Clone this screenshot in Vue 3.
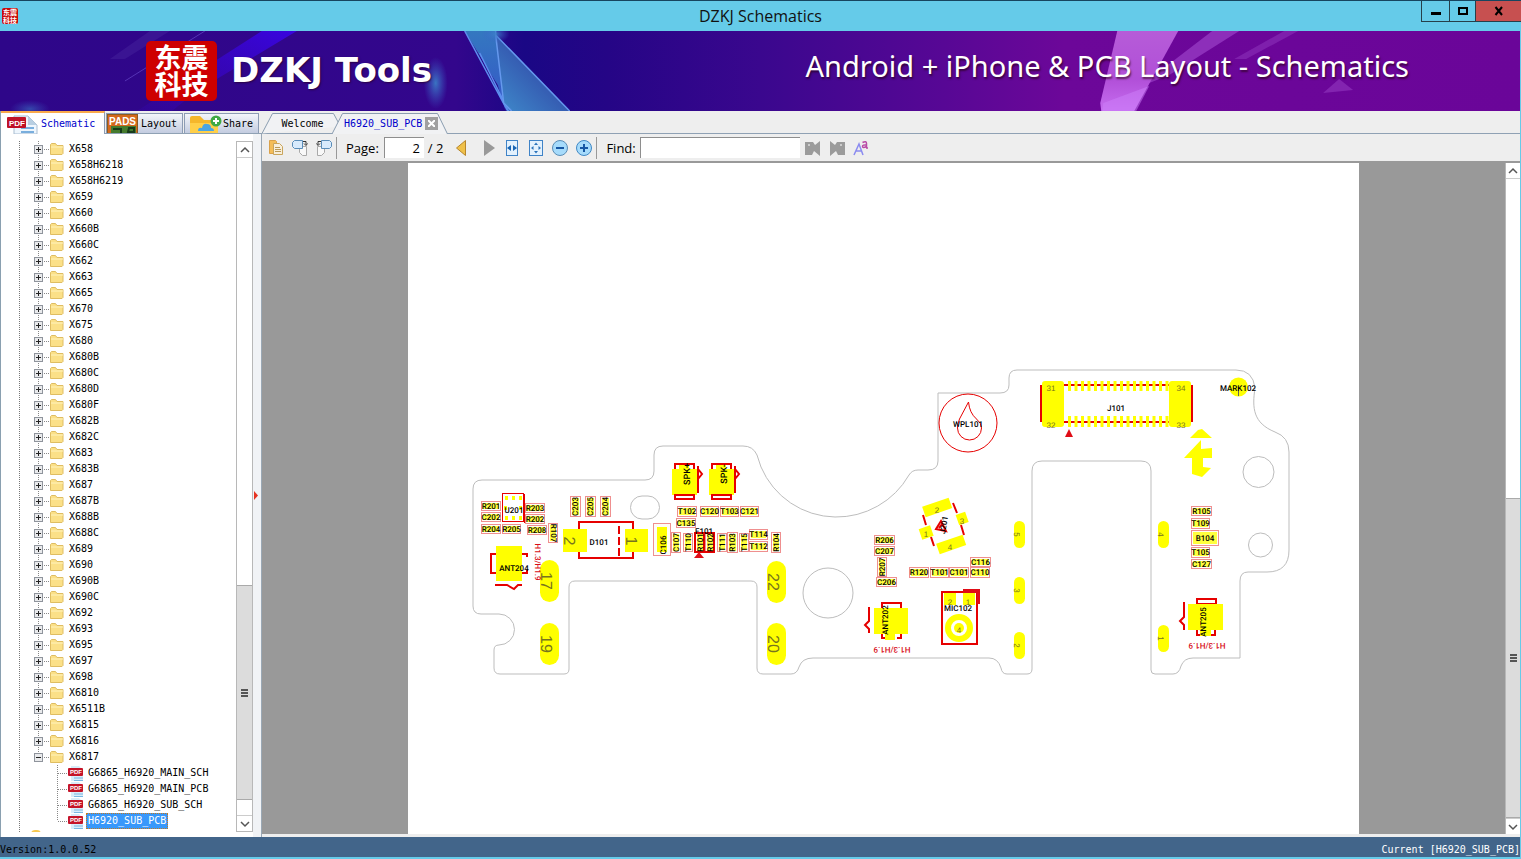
<script setup>
import { ref } from 'vue'

const models = ['X658', 'X658H6218', 'X658H6219', 'X659', 'X660', 'X660B', 'X660C', 'X662', 'X663', 'X665', 'X670', 'X675', 'X680', 'X680B', 'X680C', 'X680D', 'X680F', 'X682B', 'X682C', 'X683', 'X683B', 'X687', 'X687B', 'X688B', 'X688C', 'X689', 'X690', 'X690B', 'X690C', 'X692', 'X693', 'X695', 'X697', 'X698', 'X6810', 'X6511B', 'X6815', 'X6816', 'X6817']
const files = ['G6865_H6920_MAIN_SCH', 'G6865_H6920_MAIN_PCB', 'G6865_H6920_SUB_SCH', 'H6920_SUB_PCB']
const selected = ref('H6920_SUB_PCB')
const page = ref('2')
const find = ref('')

// name, x, y, width, height, text rotation
const parts = [
  ['R201', 481, 501, 20, 10, 0], ['C202', 481, 512, 20, 10, 0], ['R203', 525, 503, 20, 10, 0], ['R202', 525, 514, 20, 10, 0],
  ['R204', 481, 524, 20, 10, 0], ['R205', 502, 524, 19, 10, 0], ['R208', 527, 525, 20, 10, 0], ['R107', 548, 523, 10, 20, 90],
  ['C203', 570, 496, 11, 21, -90], ['C205', 585, 496, 11, 21, -90], ['C204', 600, 496, 11, 21, -90],
  ['T102', 677, 506, 20, 11, 0], ['C120', 700, 506, 19, 11, 0], ['T103', 720, 506, 19, 11, 0], ['C121', 740, 506, 19, 11, 0],
  ['C135', 676, 518, 20, 10, 0], ['C107', 671, 532, 10, 21, -90], ['T110', 683, 533, 10, 19, -90], ['R101', 695, 532, 10, 21, -90],
  ['R102', 705, 532, 10, 21, -90], ['T111', 717, 533, 10, 19, -90], ['R103', 727, 532, 11, 21, -90], ['T115', 739, 533, 10, 19, -90],
  ['T114', 749, 529, 19, 11, 0], ['T112', 749, 541, 19, 11, 0], ['R104', 771, 532, 10, 21, -90],
  ['R206', 874, 535, 21, 10, 0], ['C207', 874, 546, 21, 10, 0], ['R207', 877, 557, 10, 20, -90], ['C206', 876, 577, 21, 10, 0],
  ['R120', 909, 567, 20, 11, 0], ['T101', 930, 567, 19, 11, 0], ['C101', 949, 567, 20, 11, 0], ['C110', 970, 567, 20, 11, 0], ['C116', 970, 557, 21, 10, 0],
  ['R105', 1191, 506, 21, 10, 0], ['T109', 1191, 518, 19, 11, 0], ['B104', 1191, 530, 28, 16, 0], ['T105', 1191, 547, 19, 11, 0], ['C127', 1191, 559, 21, 10, 0],
]
const slots = [
  ['17', 540, 560, 19, 42], ['19', 540, 623, 19, 42], ['22', 767, 561, 19, 42], ['20', 767, 623, 19, 42],
  ['5', 1014, 521, 11, 27], ['3', 1014, 577, 11, 27], ['2', 1014, 632, 11, 27], ['4', 1158, 521, 11, 27], ['1', 1158, 625, 11, 27],
]
const pins = Array.from({ length: 16 }, (_, i) => 1068 + i * 6.5)
const spin = (x, y, a) => `translate(${x} ${y}) rotate(${a})`
</script>

<template>
  <div class="window">
    <header class="titlebar">
      <span class="appicon" aria-hidden="true">东震<br />科技</span>
      <h1>DZKJ Schematics</h1>
      <div class="winbtns">
        <button type="button" class="min" aria-label="Minimize"><svg width="12" height="12"><path d="M1 8.500h10" stroke="#000" stroke-width="3" /></svg></button>
        <button type="button" class="max" aria-label="Maximize"><svg width="12" height="12"><rect x="2" y="3" width="8" height="6" fill="none" stroke="#000" stroke-width="2" /></svg></button>
        <button type="button" class="close" aria-label="Close"><svg width="12" height="12"><path d="M2.500 2l6.500 8M9 2l-6.500 8" stroke="#000" stroke-width="2" /></svg></button>
      </div>
    </header>

    <div class="banner">
      <svg class="art" viewBox="0 0 1521 80" preserveAspectRatio="none" aria-hidden="true">
        <defs>
          <linearGradient id="bg">
            <stop offset="0" stop-color="#2e0689" /><stop offset=".3" stop-color="#33068c" /><stop offset=".345" stop-color="#1a0785" />
            <stop offset=".4" stop-color="#250586" /><stop offset=".5" stop-color="#3a078e" /><stop offset=".62" stop-color="#570795" />
            <stop offset=".7" stop-color="#6c0799" /><stop offset="1" stop-color="#6a0599" />
          </linearGradient>
          <linearGradient id="ray" x1="1" y1="0" x2="0" y2="1"><stop offset="0" stop-color="#3905e0" /><stop offset="1" stop-color="#3905c8" stop-opacity=".15" /></linearGradient>
          <linearGradient id="tri" x1="0" y1="0" x2="0" y2="1"><stop offset="0" stop-color="#3478c0" /><stop offset="1" stop-color="#3555c8" /></linearGradient>
          <linearGradient id="tri2" x1="0" y1="1" x2="1" y2="0"><stop offset="0" stop-color="#3f8ccc" /><stop offset="1" stop-color="#2b2c98" /></linearGradient>
          <linearGradient id="pink" x1="0" y1="0" x2="0" y2="1"><stop offset="0" stop-color="#b65cd8" /><stop offset=".6" stop-color="#b14fd8" /><stop offset="1" stop-color="#c66df0" /></linearGradient>
          <radialGradient id="glow"><stop offset="0" stop-color="#3b80c8" stop-opacity=".9" /><stop offset="1" stop-color="#3b60c8" stop-opacity="0" /></radialGradient>
        </defs>
        <rect width="1521" height="80" fill="url(#bg)" />
        <path d="M262 0h35L197 60 172 80h-35z" fill="url(#ray)" />
        <path d="M205 0 125 50" stroke="#6547c8" stroke-width="1" opacity=".7" />
        <path d="M150 0h20L125 28h-15z" fill="#4a2aa0" opacity=".4" />
        <ellipse cx="30" cy="78" rx="20" ry="9" fill="url(#glow)" opacity=".6" />
        <ellipse cx="436" cy="52" rx="12" ry="26" fill="url(#glow)" />
        <path d="M465 0h31l10 80L498 54z" fill="url(#tri)" />
        <path d="M465 0 508 80M480 22 509 80" stroke="#5d8fee" stroke-width="1.500" />
        <path d="M496 4 570 80H510L504 72z" fill="url(#tri2)" />
        <path d="M496 0v4L504 72l8 8M496 4l74 76" fill="none" stroke="#6598ed" stroke-width="1.500" />
        <ellipse cx="496" cy="3" rx="14" ry="9" fill="url(#glow)" />
        <path d="M1213 0h27L1170 44l-30 12z" fill="#a34bd0" opacity=".6" />
        <path d="M1285 0h14l-52 28h-12z" fill="#9b46c8" opacity=".4" />
        <path d="M1118 0h61l-44 80h-33l-1-8z" fill="url(#pink)" />
        <path d="M1104 72 1150 55 1137 80h-34z" fill="#ce80fa" opacity=".5" />
        <path d="m1324 62 16-14 14 11z" fill="#9238bf" opacity=".6" />
      </svg>
      <div class="brand">
        <span class="logo">东震<br />科技</span>
        <span class="name">DZKJ Tools</span>
      </div>
      <p class="tagline">Android + iPhone &amp; PCB Layout - Schematics</p>
    </div>

    <main class="body">
      <aside class="side">
        <nav class="sidetabs">
          <button type="button" class="stab on">
            <svg width="32" height="20" aria-hidden="true">
              <path d="M7 2h14l9 9v9H7z" fill="#eef6fd" stroke="#a9bdd0" /><path d="m21 2 9 9h-9z" fill="#b8cfe2" /><path d="M14 14h13M14 18h13" stroke="#79aedd" stroke-width="2" />
              <rect x="0" y="3" width="19" height="11" rx="1" fill="#c01227" /><text x="2" y="12" class="pdf big">PDF</text>
            </svg>Schematic
          </button>
          <button type="button" class="stab">
            <svg width="31" height="19" aria-hidden="true">
              <rect x=".5" y=".5" width="30" height="20" fill="#d4691c" stroke="#8c5b22" /><text x="2" y="11" class="pads">PADS</text>
              <rect x="4" y="12" width="25" height="7" fill="#457b2e" /><path d="M6 15h8v4M22 14h5v4h-6z" stroke="#173b1a" stroke-width="2" fill="none" />
            </svg>Layout
          </button>
          <button type="button" class="stab share">
            <svg width="34" height="20" aria-hidden="true">
              <path d="M1 4q0-2 2-2h8l4 4h12q2 0 2 2v12H1z" fill="#f5b72b" /><path d="M1 9h28v11H1z" fill="#ffcf48" />
              <path d="M9 17q0-4 4-3 1-5 5-4 4 0 4 4 3 0 3 3z" fill="#4aa5e4" /><circle cx="27" cy="7" r="5.500" fill="#3faa45" /><path d="M27 4v6M24 7h6" stroke="#fff" stroke-width="2" />
            </svg>Share
          </button>
        </nav>
        <div class="treewrap">
          <div class="tree">
            <ul class="rows">
              <li v-for="(m, i) in models" :key="m" class="row">
                <svg width="47" height="16" aria-hidden="true">
                  <path class="dots" :d="i === models.length - 1 ? 'M19.500 0v8' : 'M19.500 0v16'" /><path class="dots" d="M25 8.500h6" />
                  <rect x="15.500" y="4.500" width="8" height="8" fill="#e9eaec" stroke="#8f949c" />
                  <path :d="i === models.length - 1 ? 'M17 8.500h5' : 'M17 8.500h5M19.500 6v5'" stroke="#222" />
                  <path d="M31.500 3.500l1-1h4l1.500 2h6v8l-1 1h-11.500z" fill="#fbe088" stroke="#dfbd62" /><path d="M32 6h12" stroke="#fff3bd" />
                </svg><span>{{ m }}</span>
              </li>
              <li v-for="f in files" :key="f" class="row file" :class="{ sel: f === selected }">
                <svg width="28" height="16" aria-hidden="true">
                  <path class="dots" :d="f === files[3] ? 'M.5 0v8' : 'M.5 0v16'" /><path class="dots" d="M1 8.500h10" />
                  <path d="M14 1h8l4 4v11H14z" fill="#d8ecf9" /><path d="M17 13h9M17 15.500h9" stroke="#79b7e2" />
                  <rect x="11" y="3" width="15" height="8" rx="1" fill="#c51428" /><text x="13" y="9" class="pdf">PDF</text>
                </svg><a href="#" @click.prevent="selected = f">{{ f }}</a>
              </li>
            </ul>
            <span class="peek"></span>
          </div>
          <div class="scroll">
            <button type="button" aria-label="Scroll up"><svg width="10" height="8"><path d="m1 6 4-4 4 4" /></svg></button>
            <span class="gap-a"></span>
            <span class="thumb tree-thumb"><i></i></span>
            <span class="gap-b"></span>
            <button type="button" aria-label="Scroll down"><svg width="10" height="8"><path d="m1 2 4 4 4-4" /></svg></button>
          </div>
          <span class="splitter"><svg width="5" height="9"><path d="M1 0l4 4.500L1 9z" fill="#e63322" /></svg></span>
        </div>
      </aside>

      <section class="viewer">
        <nav class="doctabs">
          <button type="button" class="dtab first"><svg viewBox="0 0 78 21" aria-hidden="true"><path d="M0 20.500 10.500.5h61l7 13" /></svg><span>Welcome</span></button>
          <div class="dtab second">
            <svg viewBox="0 0 116 21" aria-hidden="true"><path d="M0 21 10.500.5h95l10 20.500" /></svg>
            <a href="#">H6920_SUB_PCB</a>
            <button type="button" aria-label="Close tab"><svg width="7" height="7"><path d="m0 0 7 7M7 0 0 7" stroke="#fff" stroke-width="2" /></svg></button>
          </div>
        </nav>
        <div class="toolbar">
          <div class="group">
            <button type="button" aria-label="Copy pages"><svg width="16" height="16"><path d="M1.500.5h6l1 1v12h-7z" fill="#f4bd58" stroke="#d9a14a" /><path d="M5.500 3.500h6l3 3v8h-9z" fill="#f8efdc" stroke="#c9a55c" /><path d="M7 7.500h5M7 9.500h6M7 11.500h6" stroke="#b99a59" /></svg></button>
            <button type="button" aria-label="Rotate right"><svg width="16" height="16"><path d="M7.500 6.500h7v9h-4l-3-3z" fill="#f8f8f8" stroke="#a9a9a9" /><path d="M2.500.5h8v8h-8l-2-2v-4z" fill="#d7eafc" stroke="#5a8db9" /><path d="M11 1.500h3v3m-2-1 2 2 1.500-2" fill="none" stroke="#333" /></svg></button>
            <button type="button" aria-label="Rotate left"><svg width="16" height="16"><path d="M1.500 6.500h7v6l-3 3h-4z" fill="#f8f8f8" stroke="#a9a9a9" /><path d="M5.500.5h8l2 2v4l-2 2h-8z" fill="#d7eafc" stroke="#5a8db9" /><path d="M5 1.500H2v3m2-1-2 2-1.500-2" fill="none" stroke="#333" /></svg></button>
          </div>
          <i class="sep"></i>
          <label for="page">Page:</label><input id="page" v-model="page" class="num" type="text" /><span class="total">/ 2</span>
          <div class="group">
            <button type="button" aria-label="Previous page"><svg width="16" height="16"><path d="m2.500 8 9-7.500v15z" fill="#efc049" stroke="#b7862c" /></svg></button>
            <button type="button" aria-label="Next page" class="next"><svg width="16" height="16"><path d="m3 0 11 8-11 8z" fill="#999" /></svg></button>
            <button type="button" aria-label="Fit width"><svg width="16" height="16"><rect x="2.500" y=".5" width="11" height="15" fill="#e3f1fd" stroke="#3f83c7" /><path d="m7 5-4 3 4 3zM9 5l4 3-4 3z" fill="#1865b4" /></svg></button>
            <button type="button" aria-label="Fit page"><svg width="16" height="16"><rect x="1.500" y=".5" width="13" height="15" fill="#e3f1fd" stroke="#3f83c7" /><path d="m6 5 2-2.500L10 5zM6 11l2 2.500 2-2.500zM5.500 6 3 8l2.500 2zM10.500 6 13 8l-2.500 2z" fill="#2b73ba" /></svg></button>
            <button type="button" aria-label="Zoom out"><svg width="16" height="16"><circle cx="8" cy="8" r="7.500" fill="#a6dbfb" stroke="#5a8db6" /><path d="M4 8h8" stroke="#1657a4" stroke-width="2" /></svg></button>
            <button type="button" aria-label="Zoom in"><svg width="16" height="16"><circle cx="8" cy="8" r="7.500" fill="#a6dbfb" stroke="#3f88c5" /><path d="M4 8h8M8 4v8" stroke="#1657a4" stroke-width="2" /></svg></button>
          </div>
          <i class="sep"></i>
          <label for="find">Find:</label><input id="find" v-model="find" class="find" type="text" />
          <div class="group last">
            <button type="button" aria-label="Find previous"><svg width="16" height="16"><path d="M0 2h8l2 3 5-4v15l-6-5-2 4H0z" fill="#9b9b9b" /><circle cx="4" cy="5" r="1" fill="#ddd" /></svg></button>
            <button type="button" aria-label="Find next"><svg width="16" height="16"><path d="M16 2H8L6 5 1 1v15l6-5 2 4h7z" fill="#9b9b9b" /><circle cx="12" cy="5" r="1" fill="#ddd" /></svg></button>
            <button type="button" aria-label="Match case"><svg width="16" height="16"><path d="m1 15 5-11 4 11M2.500 11h6.500" fill="none" stroke="#8b8bf0" stroke-width="1.500" /><path d="M9.500 2.500q4-2 4 1V8m0-3q-4-.5-4 1.500t4 0M13 8h2" fill="none" stroke="#b94aa6" stroke-width="1.500" /></svg></button>
          </div>
        </div>

        <div class="canvas">
          <div class="stage">
            <svg class="sheet" viewBox="408 163 951 671" role="img" aria-label="H6920 sub PCB layout">
              <g class="edge">
                <path d="M473 489q0-9 9-9H645q9 0 9-9V455q0-9 9-9H743q10 0 14 9l4 12A82 82 0 0 0 835 517 84 84 0 0 0 909 475q3-5 9-5h10q10 0 10-9V393h62q9 0 9-8v-7q0-8 8-8H1236q17 0 19 18c-3 20-2 35 20 44q14 5 14 20V550q0 22-22 22h-19q-8 0-8 9v77h-47q-9 0-12 8-2 8-8 8h-18q-4 0-4-4V471q0-10-10-10H1042q-10 0-10 10V669q0 5-5 5h-20q-5 0-6-6-3-10-12-10H813q-11 0-14 9-2 7-8 7h-28q-6 0-6-6V587q0-6-6-6H575q-6 0-6 6V669q0 5-5 5H500q-6 0-6-6V650q0-5 5-5a15.500 15.500 0 0 0 0-31H481q-8 0-8-8z" />
                <rect x="630.500" y="496" width="29" height="23" rx="11.500" /><circle cx="828" cy="593" r="25" /><circle cx="1258.500" cy="472" r="15.500" /><circle cx="1260.500" cy="545" r="12" />
              </g>

              <g class="pad">
                <rect v-for="s in slots" :key="s[0] + s[1] + s[2]" :x="s[1]" :y="s[2]" :width="s[3]" :height="s[4]" :rx="s[3] / 2" />
              </g>
              <text v-for="s in slots" :key="'t' + s[1] + s[2]" :class="s[3] > 15 ? 'huge' : 'tiny'" :transform="spin(s[1] + (s[3] > 15 ? 5 : 2), s[2] + s[4] / 2, 90)">{{ s[0] }}</text>

              <g v-for="p in parts" :key="p[0]">
                <rect class="box" :x="p[1] + .5" :y="p[2] + .5" :width="p[3] - 1" :height="p[4] - 1" />
                <rect class="pad" :x="p[1] + 2" :y="p[2] + 2" :width="p[3] - 4" :height="p[4] - 4" opacity=".75" />
              </g>
              <g class="red w2"><path d="M695 533h19v19h-19zM704 533v19" /></g>
              <text v-for="p in parts" :key="'n' + p[0]" :transform="spin(p[1] + p[3] / 2, p[2] + p[4] / 2, p[5])">{{ p[0] }}</text>

              <rect x="502.500" y="493.500" width="21" height="28" class="red" /><path d="M524.500 494v29" class="red" />
              <path class="padline" d="M505 498h17M505 518h17" stroke-dasharray="3 4" /><path class="padline" d="M504 508h18" stroke-dasharray="3 12" />
              <text x="514" y="510">U201</text>

              <g class="red w2"><path d="M579 522h54v36h-54z" /><path d="M619 526v30" stroke-dasharray="8 3" /></g>
              <g class="pad"><path d="M563 529h24v23h-24zM625 529h23v23h-23z" /></g>
              <text x="599" y="542">D101</text><text class="huge" :transform="spin(568, 541, 90)">2</text><text class="huge" :transform="spin(630, 541, 90)">1</text>
              <rect class="box" x="653.500" y="523.500" width="17" height="32" /><rect class="pad" x="657" y="527" width="10" height="25" /><text :transform="spin(663, 545, -90)">C106</text>
              <text x="704" y="531">F101</text><path d="m694 558 5-6 5 6z" fill="#e00c16" />

              <g class="red w2"><path d="M496 554h-5v19h5M522 554h5v3M522 573h5v-3M495 585h12l7 4 4-4h4" /></g>
              <rect class="pad" x="496" y="546" width="26" height="35" /><text x="514" y="568">ANT204</text>
              <text class="note" :transform="spin(537, 562, 90)">H1.3/H1.9</text>

              <g v-for="k in [{ n: 'SPK+', x: 0 }, { n: 'SPK-', x: 37 }]" :key="k.n" :transform="`translate(${k.x} 0)`">
                <rect class="pad" x="672" y="469" width="25" height="26" /><path class="pad" d="M679 464h10v5h-10z" />
                <path class="red w2" d="M675 469v-5h19v5M675 495h19v4h-19zM698 466v27M698 469l4 5-4 5" /><text class="mid" :transform="spin(688, 474, -90)">{{ k.n }}</text>
              </g>

              <circle class="red" cx="968" cy="423" r="29" /><path class="red" d="M968.500 402l-9 17q-2 5-2 9a12 12 0 0 0 24 0q0-5-5-9-7-6-8-17z" /><text x="968" y="424">WPL101</text>

              <g class="pad"><rect v-for="q in [[937, 507, 28], [951, 544, 28], [926, 532, 12], [962, 518, 10]]" :key="q[0]" :x="-q[2] / 2" y="-5" :width="q[2]" height="11" :transform="spin(q[0], q[1], -19)" /></g>
              <path class="red w2" d="m923 515 3 10M931 537l3 9M953 503l4 10M961 525l3 10M936 529l5-8 5 10zM939 528l3-4" />
              <text class="tiny" x="937" y="510">2</text><text class="tiny" x="950" y="547">4</text><text class="tiny" x="926" y="534">1</text><text class="tiny" x="962" y="521">3</text>
              <text :transform="spin(944, 525, -80)">J201</text>

              <path class="red w2" d="M869 607v14l-4 4 4 4v4M882 608v-5h19v5M882 634v4h4M901 634v4h-4" /><path class="pad" d="M874 608h34v26h-13v6h-10v-6h-11z" />
              <text :transform="spin(885, 620, -90)">ANT202</text><text class="note" :transform="spin(892, 649, 180)">H1.3/H1.9</text>
              <path class="red w2" d="M1184 602v15l-4 4 4 4v5M1197 604v-5h19v5zM1197 630v5h4M1215 630v5h-4" /><path class="pad" d="M1188 604h35v26h-12v6h-11v-6h-12z" />
              <text :transform="spin(1203, 622, -90)">ANT205</text><text class="note" :transform="spin(1207, 645, 180)">H1.3/H1.9</text>

              <path class="red w2" d="M942 592h35v52h-35z" /><path d="M963 589h17v15h-3v-11h-14z" fill="#e00c16" />
              <path class="pad" d="M944 593h12v12h-12zM963 593h12v12h-12z" /><circle cx="959" cy="628" r="11" fill="none" stroke="#ff0" stroke-width="6" /><circle class="pad" cx="959" cy="628" r="5" />
              <text class="tiny" x="950" y="602">2</text><text class="tiny" x="968" y="602">1</text><text class="tiny" x="959" y="630">4</text><text x="958" y="608">MIC102</text>

              <path class="red w2" d="M1041 385v37M1192 385v37M1064 385h106M1064 422h106" />
              <g class="pad"><rect x="1042" y="381" width="22" height="46" rx="3" /><rect x="1169" y="381" width="22" height="46" rx="3" />
                <template v-for="x in pins" :key="x"><rect :x="x" y="381" width="3" height="10" /><rect :x="x" y="416" width="3" height="11" /></template>
              </g>
              <text class="tiny" x="1051" y="388">31</text><text class="tiny" x="1051" y="425">32</text><text class="tiny" x="1181" y="388">34</text><text class="tiny" x="1181" y="425">33</text>
              <text x="1116" y="408">J101</text><path d="m1065 437 4-8 4 8z" fill="#e00c16" />

              <circle class="pad" cx="1238.500" cy="387" r="9.500" /><path d="M1238.500 387v9" stroke="#665" /><text x="1238" y="388">MARK102</text>
              <path class="pad" d="m1190 438 8-8 4-1 10 9zM1184 458l17-18v9l11-1v10h-9v9l8 1-9 9-10-3v-16z" />
            </svg>
          </div>
          <div class="scroll page-scroll">
            <button type="button" aria-label="Page scroll up"><svg width="10" height="8"><path d="m1 6 4-4 4 4" /></svg></button>
            <span class="half"></span>
            <span class="thumb half"><i></i></span>
            <button type="button" aria-label="Page scroll down"><svg width="10" height="8"><path d="m1 2 4 4 4-4" /></svg></button>
          </div>
        </div>
      </section>
    </main>

    <footer class="status"><span>Version:1.0.0.52</span><span class="cur">Current [H6920_SUB_PCB]</span></footer>
  </div>
</template>

<style>
html, body { margin: 0; overflow: hidden; }
</style>
<style scoped>
* { box-sizing: border-box; }
button { border: 0; padding: 0; background: none; font: inherit; color: inherit; display: flex; align-items: center; justify-content: center; }
svg { display: block; flex: none; }
a { color: inherit; text-decoration: none; }
.window { height: 100vh; display: flex; flex-direction: column; background: #eee; border-right: 1px solid #65cbe9; border-bottom: 2px solid #65cbe9; font: 10px/16px "DejaVu Sans Mono", "Liberation Mono", monospace; color: #000; }

.titlebar { height: 31px; flex: none; background: #65cbe9; border-top: 1px solid #17455f; display: grid; grid-template-columns: 1fr auto 1fr; align-items: center; margin-right: -1px; }
.appicon { width: 16px; height: 16px; margin-left: 2px; background: #c90a0a; border-radius: 2px; color: #fff; font: bold 7px/8px "Noto Sans CJK SC", sans-serif; text-align: center; overflow: hidden; }
h1 { margin: 0; font: 16px/28px "Open Sans", "Noto Sans", sans-serif; color: #111; }
.winbtns { justify-self: end; align-self: start; display: flex; height: 21px; }
.winbtns button { border: solid #263f4a; border-width: 0 0 1px 1px; }
.min { width: 28px; } .max { width: 26px; } .close { width: 46px; background: #c75050; }

.banner { position: relative; height: 80px; flex: none; display: flex; align-items: center; justify-content: space-between; padding: 0 111px 0 146px; color: #fff; }
.art { position: absolute; inset: 0; width: 100%; height: 100%; }
.brand { position: relative; display: flex; align-items: center; gap: 14px; }
.logo { width: 71px; height: 60px; border-radius: 5px; background: #ce0000; font: bold 27px/27px "Noto Sans CJK SC", sans-serif; text-align: center; padding-top: 2px; }
.name { font: bold 34px/58px "DejaVu Sans", "Open Sans", sans-serif; padding-bottom: 2px; text-shadow: 1px 1px 2px #2008; }
.tagline { position: relative; margin: 0 0 10px; font: 29px/40px "Noto Sans", "Open Sans", sans-serif; text-shadow: 1px 2px 2px #2009; white-space: nowrap; }

.body { flex: 1; min-height: 0; display: flex; }
.side { width: 262px; flex: none; display: flex; flex-direction: column; border-left: 1px solid #8aa0b0; }
.sidetabs { height: 23px; flex: none; display: flex; align-items: flex-end; gap: 1px; border-bottom: 1px solid #8fa1b4; }
.stab { height: 20px; width: 77px; gap: 3px; border: 1px solid #8c9cb4; border-bottom: 0; background: linear-gradient(#f3f5fa, #c3cce0); overflow: hidden; justify-content: flex-start; }
.stab.on { width: 104px; height: 23px; padding-left: 6px; gap: 2px; background: #fff; border-width: 2px 1px 0 0; border-top-color: #f9a94b; color: #00c; margin-bottom: -1px; }
.stab.share { padding-left: 4px; width: 75px; gap: 0; }
.pdf { font: bold 6px "Liberation Sans", sans-serif; fill: #fff; }
.pdf.big { font-size: 8px; }
.pads { font: bold 10px "Liberation Sans", sans-serif; fill: #fff; }
.treewrap { flex: 1; min-height: 0; display: flex; background: #fff; padding: 7px 0 5px; }
.tree { flex: 1; min-width: 0; overflow: hidden; padding-left: 18px; position: relative; }
.tree::before { content: ""; position: absolute; left: 18px; top: 0; bottom: 0; border-left: 1px dotted #777; }
.rows { list-style: none; margin: 0; padding: 0; }
.row { height: 16px; display: flex; align-items: center; }
.row span { padding-left: 3px; }
.file { padding-left: 38px; }
.file a { padding: 0 1px; margin-left: 1px; line-height: 14px; border: 1px dotted transparent; }
.sel a { background: #3898fb; color: #fff; border-color: #c47a20; }
.dots { stroke: #888; stroke-dasharray: 1 1; fill: none; }
.peek { display: block; width: 10px; height: 4px; margin: 1px 0 0 12px; border-radius: 4px 4px 0 0; background: #f6c850; }
.scroll { width: 17px; flex: none; display: flex; flex-direction: column; border: 1px solid #b8b8b8; background: #fff; }
.scroll button { height: 16px; flex: none; border-bottom: 1px solid #ccc; }
.scroll button:last-child { border: 0; border-top: 1px solid #ccc; }
.scroll path { fill: none; stroke: #555; stroke-width: 1.500; }
.gap-a { flex: 430; } .tree-thumb { flex: 214; } .gap-b { flex: 15; }
.thumb { display: flex; align-items: center; justify-content: center; background: #dcdcdc; border: solid #aaa; border-width: 1px 0; }
.thumb i { width: 7px; height: 8px; background: repeating-linear-gradient(#555 0 2px, transparent 2px 3px); }
.splitter { width: 9px; margin: -7px 0 -5px; padding-top: 20px; display: flex; align-items: center; background: #f1f3f6; border-right: 1px solid #9aa8b5; }

.viewer { flex: 1; min-width: 0; display: flex; flex-direction: column; padding-bottom: 3px; }
.doctabs { height: 23px; flex: none; display: flex; align-items: flex-end; border-bottom: 1px solid #8fa1b4; }
.dtab { position: relative; height: 21px; display: flex; align-items: center; flex: none; margin-bottom: -1px; }
.dtab > svg { position: absolute; left: 0; top: 0; width: 100%; height: 100%; fill: #f1f2f4; stroke: #8a9db0; }
.dtab > span, .dtab > a, .dtab > button { position: relative; }
.first { width: 78px; padding-left: 3px; }
.second { width: 116px; margin-left: -8px; padding-left: 12px; color: #00c; gap: 3px; }
.second button { width: 13px; height: 13px; background: #a0a0a0; }
.toolbar { height: 29px; flex: none; display: flex; align-items: center; padding-left: 6px; border-bottom: 2px solid #999; font: 13px/20px "Open Sans", "Noto Sans", sans-serif; }
.group { display: flex; gap: 8px; }
.sep { width: 1px; height: 22px; background: #999; margin: 0 9px 0 4px; }
.toolbar input { height: 21px; border: solid #8e8e8e; border-width: 1px 0 0 1px; background: #fff; font: inherit; padding: 0 4px; outline: 0; }
.toolbar label { flex: none; }
.num { width: 40px; margin-left: 5px; text-align: right; }
.total { margin: 0 11px 0 4px; white-space: pre; }
.find { width: 160px; margin-left: 4px; }
.last { margin-left: 5px; gap: 8px; }
.next { margin: 0 -1px 0 3px; }
.canvas { flex: 1; min-height: 0; display: flex; }
.stage { flex: 1; min-width: 0; display: flex; justify-content: center; background: #999; }
.sheet { height: 100%; aspect-ratio: 951 / 671; background: #fff; }
.page-scroll { width: 15px; border-width: 0 0 0 1px; }
.half { flex: 1; }

.sheet text { font: 500 8px Roboto, "Liberation Sans", sans-serif; text-rendering: geometricPrecision; fill: #000; text-anchor: middle; dominant-baseline: central; }
.sheet text.mid { font-size: 9px; }
.sheet text.tiny { font: 8px "Liberation Sans", sans-serif; fill: #77741e; }
.sheet text.huge { font: 16px "Liberation Sans", sans-serif; fill: #77741e; }
.sheet text.note { font-size: 8px; fill: #d80c16; }
.edge { fill: none; stroke: #bdbdbd; stroke-width: 1; }
.pad { fill: #ff0; }
.padline { stroke: #ff0; stroke-width: 4; }
.box { fill: #fffdf5; stroke: #ef8f8f; }
.red { fill: none; stroke: #e60000; stroke-width: 1; }
.w2 { stroke-width: 2; }
.status { height: 20px; flex: none; display: flex; align-items: flex-end; justify-content: space-between; background: #42658a; line-height: 15px; }
.cur { color: #fff; }
</style>
